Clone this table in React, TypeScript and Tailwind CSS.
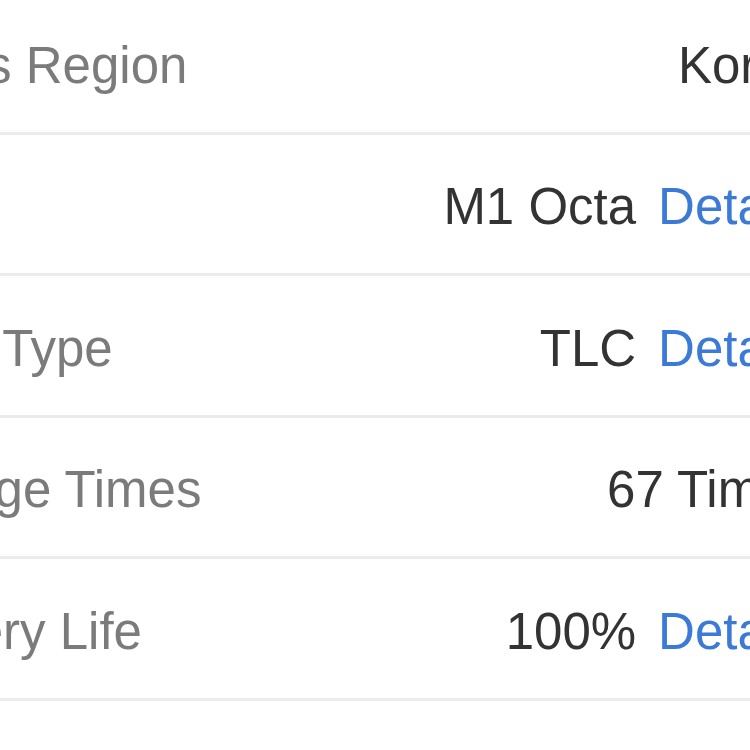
const rows = [
  { label: 'Sales Region', value: 'Korea', details: false },
  { label: 'CPU', value: 'M1 Octa', details: true },
  { label: 'Chip Type', value: 'TLC', details: true },
  { label: 'Charge Times', value: '67 Times', details: false },
  { label: 'Battery Life', value: '100%', details: true },
];

export default function App() {
  return (
    <div className="w-[750px] h-[750px] overflow-hidden bg-white font-['Liberation_Sans',Arial,sans-serif]">
      <div className="ml-[-116px] mt-[-7px] w-[930px]">
        {rows.map((row) => (
          <div
            key={row.label}
            className="flex h-[141.5px] items-center justify-between border-b-[3px] border-[#ebebeb] pt-[6px] text-[51px] leading-none"
          >
            <span className="text-[#7b7b7b] whitespace-nowrap">{row.label}</span>
            <span className="flex items-center whitespace-nowrap">
              <span className="text-[#333333]">{row.value}</span>
              {row.details && <span className="ml-[22px] text-[#3b7ad6]">Details</span>}
            </span>
          </div>
        ))}
      </div>
    </div>
  );
}
